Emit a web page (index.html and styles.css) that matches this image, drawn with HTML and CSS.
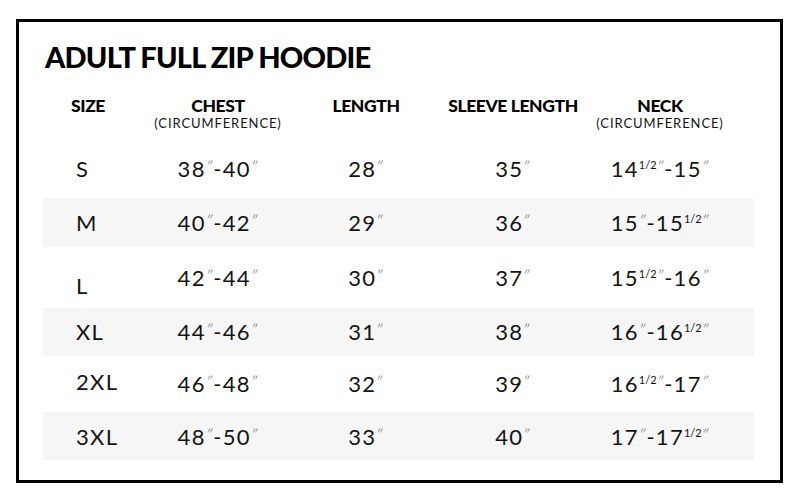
FILE: index.html
```html
<!DOCTYPE html>
<html>
<head>
<meta charset="utf-8">
<link rel="stylesheet" href="styles.css">
</head>
<body>
<div class="frame">
  <h1 class="title">ADULT FULL ZIP HOODIE</h1>
  <div class="table">
    <div class="row head">
      <div class="cell c-size"><span class="h">SIZE</span></div>
      <div class="cell"><span class="h">CHEST</span><span class="sub">(CIRCUMFERENCE)</span></div>
      <div class="cell"><span class="h">LENGTH</span></div>
      <div class="cell"><span class="h">SLEEVE LENGTH</span></div>
      <div class="cell"><span class="h">NECK</span><span class="sub">(CIRCUMFERENCE)</span></div>
    </div>
    <div class="row r-s">
      <div class="cell c-size">S</div>
      <div class="cell">38<span class="in">″</span>-40<span class="in">″</span></div>
      <div class="cell">28<span class="in">″</span></div>
      <div class="cell">35<span class="in">″</span></div>
      <div class="cell c-neck">14<sup class="fr">1/2</sup><span class="in">″</span>-15<span class="in">″</span></div>
    </div>
    <div class="row r-m alt">
      <div class="cell c-size">M</div>
      <div class="cell">40<span class="in">″</span>-42<span class="in">″</span></div>
      <div class="cell">29<span class="in">″</span></div>
      <div class="cell">36<span class="in">″</span></div>
      <div class="cell c-neck">15<span class="in">″</span>-15<sup class="fr">1/2</sup><span class="in">″</span></div>
    </div>
    <div class="row r-l">
      <div class="cell c-size low">L</div>
      <div class="cell">42<span class="in">″</span>-44<span class="in">″</span></div>
      <div class="cell">30<span class="in">″</span></div>
      <div class="cell">37<span class="in">″</span></div>
      <div class="cell c-neck">15<sup class="fr">1/2</sup><span class="in">″</span>-16<span class="in">″</span></div>
    </div>
    <div class="row r-xl alt">
      <div class="cell c-size">XL</div>
      <div class="cell">44<span class="in">″</span>-46<span class="in">″</span></div>
      <div class="cell">31<span class="in">″</span></div>
      <div class="cell">38<span class="in">″</span></div>
      <div class="cell c-neck">16<span class="in">″</span>-16<sup class="fr">1/2</sup><span class="in">″</span></div>
    </div>
    <div class="row r-2xl">
      <div class="cell c-size high">2XL</div>
      <div class="cell">46<span class="in">″</span>-48<span class="in">″</span></div>
      <div class="cell">32<span class="in">″</span></div>
      <div class="cell">39<span class="in">″</span></div>
      <div class="cell c-neck">16<sup class="fr">1/2</sup><span class="in">″</span>-17<span class="in">″</span></div>
    </div>
    <div class="row r-3xl alt">
      <div class="cell c-size">3XL</div>
      <div class="cell">48<span class="in">″</span>-50<span class="in">″</span></div>
      <div class="cell">33<span class="in">″</span></div>
      <div class="cell">40<span class="in">″</span></div>
      <div class="cell c-neck">17<span class="in">″</span>-17<sup class="fr">1/2</sup><span class="in">″</span></div>
    </div>
  </div>
</div>
</body>
</html>
```
FILE: styles.css
```css
* { box-sizing: border-box; }
html, body { margin: 0; padding: 0; background: #fff; }
body {
  width: 800px;
  height: 500px;
  font-family: Lato, "Liberation Sans", sans-serif;
  color: #141414;
}
.frame {
  margin: 19px 0 0 16px;
  width: 767px;
  height: 464px;
  border: 3px solid #000;
  padding: 19px 0 0 24px;
}
.title {
  margin: 0 0 0 2px;
  font-size: 29px;
  line-height: 32px;
  font-weight: 900;
  letter-spacing: -0.8px;
  color: #000;
}
.table {
  margin-top: 20px;
  width: 711px;
}
.row {
  display: grid;
  grid-template-columns: 90px 170px 126px 168px 126px 1fr;
  align-items: center;
  font-size: 22px;
  letter-spacing: 1.3px;
}
.row.alt { background: #f6f6f6; }
.cell { text-align: center; }
.c-size { text-align: left; padding-left: 33px; }
.row.head .c-size { text-align: center; padding-left: 0; }
.head { align-items: start; height: 55px; padding-top: 3px; }
.head .cell { display: flex; flex-direction: column; align-items: center; }
.h {
  font-weight: 900;
  font-size: 17.5px;
  line-height: 20px;
  letter-spacing: -0.4px;
  color: #000;
}
.sub {
  font-size: 13px;
  line-height: 14px;
  letter-spacing: 0.9px;
  margin-top: 0;
}
.r-s { height: 50px; padding-bottom: 10px; }
.r-m { height: 49px; }
.r-l { height: 61px; }
.r-xl { height: 47px; }
.r-2xl { height: 57px; }
.r-3xl { height: 48px; }
.low { padding-top: 16px; }
.high { padding-bottom: 4px; }
.in {
  display: inline-block;
  font-size: 13px;
  font-weight: 300;
  letter-spacing: 0;
  vertical-align: 6px;
  line-height: 0;
  margin: 0 1px 0 0;
  transform: skewX(-12deg);
}
.fr {
  font-size: 11px;
  letter-spacing: 0;
  vertical-align: 8px;
  line-height: 0;
}
```
